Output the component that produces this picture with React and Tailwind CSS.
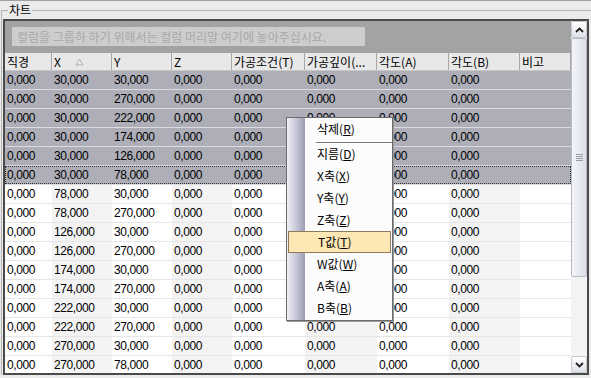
import React from "react";

const cols = [47, 60, 60, 60, 73, 72, 72, 71, 51];
const headers = ["직경", "X", "Y", "Z", "가공조건(T)", "가공깊이(...", "각도(A)", "각도(B)", "비고"];

const fmt = (n) => `${n},000`;

const rowsData = [
  [30, 30, true],
  [30, 270, true],
  [30, 222, true],
  [30, 174, true],
  [30, 126, true],
  [30, 78, true, true],
  [78, 30],
  [78, 270],
  [126, 30],
  [126, 270],
  [174, 30],
  [174, 270],
  [222, 30],
  [222, 270],
  [270, 30],
  [270, 78],
];

const ko = { fontFamily: "'Noto Sans CJK KR', 'Noto Sans', sans-serif" };
const num = { fontFamily: "'Liberation Sans', 'Noto Sans CJK KR', sans-serif" };

function Row({ x, y, sel, focus }) {
  const vals = ["0,000", fmt(x), fmt(y), "0,000", "0,000", "0,000", "0,000", "0,000", ""];
  return (
    <div
      className={
        "relative flex h-[19px] shrink-0 border-b " +
        (sel ? "bg-[#adaeb7] border-[#dcdce0]" : "bg-white border-[#e6e6e6]")
      }
    >
      {vals.map((v, i) => (
        <div
          key={i}
          style={{ width: cols[i], ...num }}
          className={
            "shrink-0 pl-[2px] text-[12px] leading-[18px] tracking-[-0.4px] text-black " +
            (!sel && i % 2 === 1 && i < 8 ? "bg-[#f3f3f3]" : "")
          }
        >
          {v}
        </div>
      ))}
      {focus && (
        <div className="pointer-events-none absolute inset-0 border border-dotted border-[#303030]" />
      )}
    </div>
  );
}

function MenuItem({ label, u, hl, h = "h-[22px]" }) {
  return (
    <div
      className={
        "relative flex items-center text-[12px] text-black " +
        h +
        " " +
        (hl ? "mx-[1px] border border-[#8c7a5a] bg-[#fde7b4] pl-[29px]" : "pl-[30px]")
      }
      style={ko}
    >
      <span>
        {label}(<span className="underline">{u}</span>)
      </span>
    </div>
  );
}

function Chevron({ up }) {
  return (
    <svg width="9" height="6" viewBox="0 0 9 6">
      <path
        d={up ? "M1 5 L4.5 1.5 L8 5" : "M1 1 L4.5 4.5 L8 1"}
        fill="none"
        stroke="#202020"
        strokeWidth="1.8"
      />
    </svg>
  );
}

export default function App() {
  return (
    <div className="relative h-[378px] w-[591px] overflow-hidden border-t border-[#a0a0a0] bg-[#ebebeb]">
      <fieldset className="ml-[1px] mt-[1px] border-l border-t border-[#b4b4b4]">
        <legend className="ml-[6px] px-[1px] text-[12px] leading-[16px] text-black" style={ko}>
          차트
        </legend>
        <div className="ml-[1px] mt-[1px] flex h-[356px] w-[586px] border-2 border-[#4a4a4a] bg-white">
          <div className="flex w-[566px] flex-col overflow-hidden">
            <div className="h-[32px] shrink-0 bg-[#a3a3a5] pl-[7px] pt-[6px]">
              <div
                className="flex h-[19px] w-[353px] items-center bg-[#cdcdcd] pl-[5px] text-[12px] text-[#a8a8a8]"
                style={ko}
              >
                컬럼을 그룹하 하기 위해서는 컬럼 머리말 여기에 놓아주십시요.
              </div>
            </div>
            <div className="flex h-[18px] shrink-0 border-b border-[#c8c8c8] bg-[#e8e8e8]">
              {headers.map((h, i) => (
                <div
                  key={i}
                  style={{ width: cols[i], ...ko }}
                  className="relative flex shrink-0 items-center border-r border-r-[#a8a8a8] pl-[2px] text-[12px] leading-[16px] text-black"
                >
                  {h}
                  {i === 1 && (
                    <svg className="ml-[14px]" width="9" height="8" viewBox="0 0 9 8">
                      <path d="M4.5 1 L8 7 L1 7 Z" fill="none" stroke="#b0b0b0" strokeWidth="1" />
                    </svg>
                  )}
                </div>
              ))}
            </div>
            {rowsData.map((r, i) => (
              <Row key={i} x={r[0]} y={r[1]} sel={!!r[2]} focus={!!r[3]} />
            ))}
          </div>
          <div className="flex flex-1 flex-col bg-[#f3f3f3]">
            <div className="flex h-[17px] items-center justify-center rounded-[2px] border border-[#c4c8d0] bg-gradient-to-b from-[#ffffff] to-[#dfe2e8]">
              <Chevron up />
            </div>
            <div className="flex h-[239px] items-center justify-center rounded-[2px] border border-[#b8bcc8] bg-gradient-to-r from-[#f4f5f9] to-[#dcdfe8]">
              <div className="flex w-[7px] flex-col gap-[1px]">
                <div className="h-px bg-[#9a9eaa]" />
                <div className="h-px bg-[#9a9eaa]" />
                <div className="h-px bg-[#9a9eaa]" />
                <div className="h-px bg-[#9a9eaa]" />
              </div>
            </div>
            <div className="flex-1" />
            <div className="flex h-[17px] items-center justify-center rounded-[2px] border border-[#c4c8d0] bg-gradient-to-b from-[#ffffff] to-[#dfe2e8]">
              <Chevron />
            </div>
          </div>
        </div>
      </fieldset>

      <div className="absolute left-[286px] top-[116px] h-[204px] w-[107px] border border-[#6c6c6c] bg-[#fcfcfc] shadow-[1px_1px_0_#9a9a9a]">
        <div className="absolute bottom-0 left-0 top-0 w-[18px] bg-gradient-to-r from-[#f0f0f6] via-[#c8c8d8] to-[#9c9cb4]" />
        <MenuItem label="삭제" u="R" h="h-[21px]" />
        <div className="relative h-[4px] pl-[29px] pt-[3px]">
          <div className="h-px w-full bg-[#7a7a7a]" />
        </div>
        <MenuItem label="지름" u="D" />
        <MenuItem label="X축" u="X" />
        <MenuItem label="Y축" u="Y" />
        <MenuItem label="Z축" u="Z" />
        <MenuItem label="T값" u="T" hl />
        <MenuItem label="W값" u="W" />
        <MenuItem label="A축" u="A" />
        <MenuItem label="B축" u="B" />
      </div>
    </div>
  );
}
